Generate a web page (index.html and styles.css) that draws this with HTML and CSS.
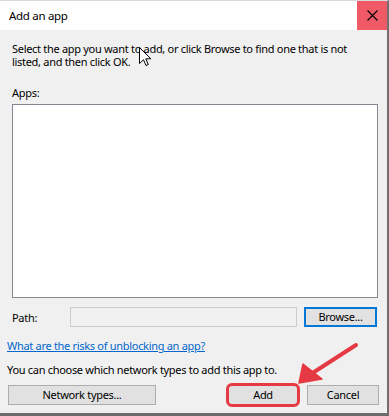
FILE: index.html
```html
<!DOCTYPE html>
<html lang="en">
<head>
    <meta charset="UTF-8">
    <title>Add an app</title>
    <link rel="stylesheet" href="styles.css">
</head>
<body>

    <div class="window">
        <!-- Title bar -->
        <div class="titlebar">
            <span class="title">Add an app</span>
            <span class="close">
                <svg width="11" height="11" viewBox="0 0 11 11"><path d="M0.5 0.5 L10.5 10.5 M10.5 0.5 L0.5 10.5" stroke="#000" stroke-width="1.1" fill="none"/></svg>
            </span>
        </div>

        <div class="content">
            <p class="intro">Select the app you want to add, or click Browse to find one that is not<br>listed, and then click OK.</p>
            <div class="apps-label">Apps:</div>
            <div class="apps-list"></div>

            <div class="path-row">
                <span class="path-label">Path:</span>
                <div class="path-input"></div>
                <button class="btn btn-focus browse">Browse...</button>
            </div>

            <a class="risk-link" href="#">What are the risks of unblocking an app?</a>
            <p class="network-note">You can choose which network types to add this app to.</p>

            <div class="button-row">
                <button class="btn network">Network types...</button>
                <span class="highlight"><button class="btn add">Add</button></span>
                <button class="btn cancel">Cancel</button>
            </div>
        </div>

        <!-- mouse pointer -->
        <svg class="cursor" width="13" height="20" viewBox="0 0 13 20">
            <path d="M0.5 0.5 V16.5 L4.5 12.7 L7 18.5 L9.3 17.5 L6.8 11.8 H11.8 Z" fill="#fff" stroke="#000" stroke-width="1"/>
        </svg>

        <!-- annotation arrow -->
        <svg class="arrow" width="389" height="416" viewBox="0 0 389 416">
            <line x1="356" y1="345" x2="311" y2="374" stroke="#e53a43" stroke-width="4" stroke-linecap="round"/>
            <polygon points="299,383 303,364 322,379" fill="#e53a43" stroke="#e53a43" stroke-width="1.5" stroke-linejoin="round"/>
        </svg>
    </div>

</body>
</html>
```

FILE: styles.css
```css
body {
    margin: 0;
    background-color: #6b6b6b;
    font-family: "Noto Sans", "Liberation Sans", sans-serif;
    font-size: 11px;
    letter-spacing: -0.3px;
    color: #000;
}
.window {
    position: relative;
    width: 387px;
    height: 412px;
    background-color: #f0f0f0;
    border-right: 2px solid #707070;
    border-top: 1px solid #d9d9d9;
    box-sizing: content-box;
}
.titlebar {
    display: flex;
    justify-content: space-between;
    align-items: stretch;
    height: 29px;
    background-color: #fff;
}
.title {
    padding-left: 9px;
    line-height: 30px;
    font-size: 11.5px;
}
.close {
    display: flex;
    align-items: center;
    justify-content: center;
    width: 30px;
    background-color: #f05a67;
}
.content {
    padding: 12px 0 0 7px;
    line-height: 13px;
}
.intro {
    margin: 0 0 0 5px;
    white-space: nowrap;
}
.apps-label {
    margin: 18px 0 0 5px;
}
.apps-list {
    margin: 5px 0 0 5px;
    width: 366px;
    height: 194px;
    box-sizing: border-box;
    background-color: #fff;
    border: 1px solid #828790;
}
.path-row {
    display: flex;
    align-items: center;
    margin: 9px 0 0 5px;
    height: 20px;
}
.path-label {
    width: 58px;
}
.path-input {
    width: 227px;
    height: 20px;
    box-sizing: border-box;
    border: 1px solid #cccccc;
    background-color: #f0f0f0;
}
.btn {
    height: 20px;
    box-sizing: border-box;
    padding: 0;
    border: 1px solid #adadad;
    background-color: #e1e1e1;
    font-family: inherit;
    font-size: 11px;
    letter-spacing: -0.3px;
    color: #000;
    line-height: 16px;
}
.btn-focus {
    border: 2px solid #0078d7;
}
.browse {
    width: 73px;
    margin-left: 7px;
}
.risk-link {
    display: block;
    margin-top: 12px;
    width: max-content;
    color: #0066cc;
    text-decoration: underline;
}
.network-note {
    margin: 11px 0 0 0;
}
.button-row {
    display: flex;
    align-items: center;
    margin-top: 9px;
}
.network {
    width: 148px;
    margin-left: 1px;
}
.highlight {
    display: flex;
    margin-left: 72px;
    border-radius: 4px;
    outline: 3px solid #e53a43;
    outline-offset: -1px;
}
.add {
    width: 70px;
}
.cancel {
    width: 72px;
    margin-left: 9px;
}
.cursor {
    position: absolute;
    left: 139px;
    top: 46px;
}
.arrow {
    position: absolute;
    left: 0;
    top: -1px;
    pointer-events: none;
}
```
